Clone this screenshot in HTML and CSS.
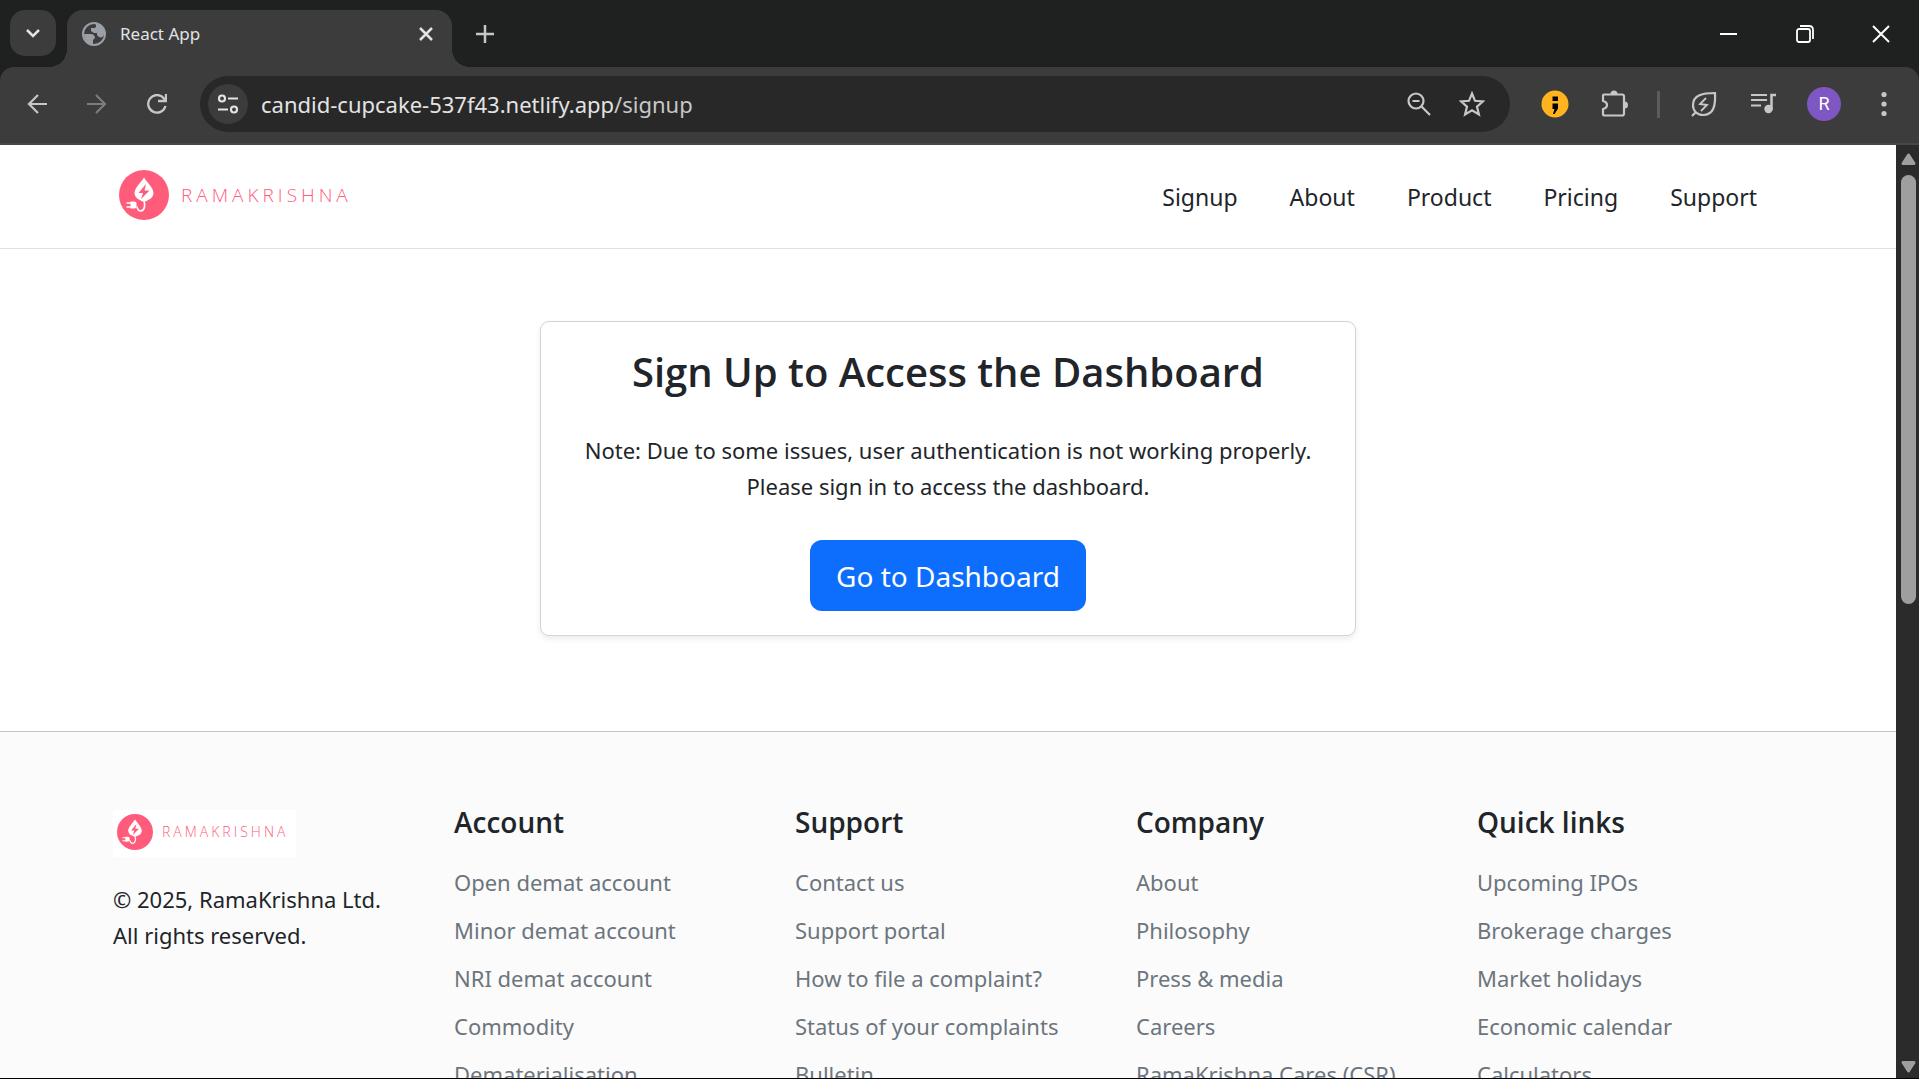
FILE: index.html
```html
<!DOCTYPE html>
<html lang="en">
<head>
<meta charset="utf-8">
<title>React App</title>
<meta name="viewport" content="width=device-width, initial-scale=1">
<link rel="stylesheet" href="styles.css">
</head>
<body>
<svg class="defs" aria-hidden="true">
  <symbol id="logo-mark" viewBox="0 0 50 50">
    <circle cx="25" cy="25" r="25" fill="#ff5c7c"/>
    <path d="M25 7.500C21 13.500 15.500 18 15.500 23.500a8.500 8.500 0 0 0 5.500 6.500q1.500 1.500 4 1.500t4-1.500A8.500 8.500 0 0 0 34.500 23.500C34.500 18 29 13.500 25 7.500Z" fill="#fff"/>
    <path d="M27 14l-7.500 9h4.500l-2 6 8.500-8.500h-5Z" fill="#ff5c7c"/>
    <path d="M25 31q1 3 .5 6t-3.500 4q-3.500 0-4-4.500" fill="none" stroke="#fff" stroke-width="1.600"/>
    <path d="M7.500 33h5M7.500 37h5" stroke="#fff" stroke-width="1.400"/>
    <path d="M11.500 31.500h3q3 0 3 2v3q0 2-3 2h-3Z" fill="#fff"/>
  </symbol>
</svg>
<div class="browser">
  <header class="tabstrip">
    <button class="tab-search" aria-label="Search tabs"><svg width="16" height="16" viewBox="0 0 16 16"><path d="M2 5l6 6 6-6" fill="none" stroke="#e3e3e3" stroke-width="2.500"/></svg></button>
    <div class="tab">
      <svg class="favicon" width="24" height="24" viewBox="0 0 24 24"><circle cx="12" cy="12" r="11" fill="none" stroke="#9aa0a6" stroke-width="2"/><path d="M13 1a11 11 0 0 1 10 11h-1c0 3-3 4-5 3l-2-2v-2h-3L9 9V6h3c2 0 2-1 2-3ZM2 12h7c2 0 3 1 4 3 0 2-2 2-2 3v5C6 22 2 18 2 12Z" fill="#9aa0a6"/></svg>
      <span class="tab-title">React App</span>
      <button class="tab-close" aria-label="Close tab"><svg width="14" height="14" viewBox="0 0 14 14"><path d="M1 1l12 12M13 1L1 13" stroke="#e3e3e3" stroke-width="2.500"/></svg></button>
    </div>
    <button class="new-tab" aria-label="New tab"><svg width="18" height="18" viewBox="0 0 18 18"><path d="M9 0v18M0 9h18" stroke="#c7c7c7" stroke-width="2.500"/></svg></button>
    <div class="window-controls">
      <button aria-label="Minimize"><svg width="18" height="18" viewBox="0 0 18 18"><path d="M0 9h17" stroke="#fff" stroke-width="2"/></svg></button>
      <button aria-label="Restore"><svg width="18" height="18" viewBox="0 0 18 18" fill="none" stroke="#fff" stroke-width="1.800"><rect x="1" y="4" width="13" height="13" rx="2"/><path d="M4 1h9q4 0 4 4v9"/></svg></button>
      <button aria-label="Close"><svg width="18" height="18" viewBox="0 0 18 18"><path d="M1 1l16 16M17 1L1 17" stroke="#fff" stroke-width="2"/></svg></button>
    </div>
  </header>

  <div class="toolbar">
    <button class="tool" aria-label="Back"><svg width="20" height="20" viewBox="0 0 20 20" fill="none" stroke="#c7c7c7" stroke-width="2.200"><path d="M20 10H2M11 1l-9 9 9 9"/></svg></button>
    <button class="tool" aria-label="Forward"><svg width="20" height="20" viewBox="0 0 20 20" fill="none" stroke="#7c7c7c" stroke-width="2.200"><path d="M0 10h18M9 1l9 9-9 9"/></svg></button>
    <button class="tool" aria-label="Reload"><svg width="20" height="20" viewBox="0 0 20 20" fill="none" stroke="#c7c7c7" stroke-width="2.300"><path d="M18.500 12A8.800 8.800 0 1 1 17 4.500l1.500 2M19 0v7h-8"/></svg></button>
    <div class="omnibox">
      <button class="site-info" aria-label="View site information"><svg width="22" height="20" viewBox="0 0 22 20" fill="none" stroke="#e3e3e3" stroke-width="2.200"><circle cx="5" cy="4.500" r="3"/><path d="M11 4.500h10M1 15.500h10"/><circle cx="17" cy="15.500" r="3"/></svg></button>
      <a class="url" href="/signup">candid-cupcake-537f43.netlify.app<span class="url-path">/signup</span></a>
      <button class="tool" aria-label="Zoom"><svg width="24" height="24" viewBox="0 0 24 24" fill="none" stroke="#c7c7c7" stroke-width="2.200"><circle cx="9" cy="9" r="7.500"/><path d="M5.500 9h7M14.500 14.500l8.500 8.500"/></svg></button>
      <button class="tool" aria-label="Bookmark this tab"><svg width="26" height="26" viewBox="0 0 26 26"><path d="M13 2.500l3 7.300 8 .6-6 5.200 1.900 7.800-6.900-4.200-6.900 4.200L8 15.600l-6-5.200 8-.6Z" fill="none" stroke="#c7c7c7" stroke-width="2.200"/></svg></button>
    </div>
    <div class="actions">
      <button class="tool" aria-label="Extension"><svg width="28" height="28" viewBox="0 0 28 28"><circle cx="14" cy="14" r="13.500" fill="#ffb41f"/><path d="M11.500 6.500h5.500v4.500h-5.500ZM11.500 13.500h5.500v5l-3.500 5.500h-1.500l1.500-5h-2Z" fill="#000"/></svg></button>
      <button class="tool" aria-label="Extensions"><svg width="28" height="28" viewBox="0 0 28 28"><path d="M3 4.500h18q2 0 2 2v17q0 2-2 2H3q-1 0-1-1v-5.500q4-1 4-4T2 11V5.500q0-1 1-1Z" fill="none" stroke="#c7c7c7" stroke-width="2.200" stroke-linejoin="round"/><path d="M9.500 4a3.500 3.500 0 0 1 7 0ZM23.500 11.500a3.500 3.500 0 0 1 0 7Z" fill="#c7c7c7"/></svg></button>
      <span class="divider"></span>
      <button class="tool" aria-label="Energy saver"><svg width="26" height="26" viewBox="0 0 26 26" fill="none" stroke="#c7c7c7" stroke-width="2.200"><path d="M24 2c.6 12-1 22-12 22C6 24 2 20 2 14 2 4 12 2 24 2ZM1 25l4-4"/><path d="M15 7l-6 6 7 1-6 6" stroke-width="1.800"/></svg></button>
      <button class="tool" aria-label="Media controls"><svg width="26" height="24" viewBox="0 0 26 24"><path d="M0 3h16M0 8h16M0 13.500h10" stroke="#c7c7c7" stroke-width="2.200"/><path d="M20.500 18V3H25" fill="none" stroke="#c7c7c7" stroke-width="2.500"/><circle cx="17.500" cy="17" r="4.200" fill="#c7c7c7"/></svg></button>
      <button class="avatar">R</button>
      <button class="tool menu" aria-label="Menu"><svg width="6" height="26" viewBox="0 0 6 26" fill="#c7c7c7"><circle cx="3" cy="3.500" r="2.600"/><circle cx="3" cy="13" r="2.600"/><circle cx="3" cy="22.500" r="2.600"/></svg></button>
    </div>
  </div>

  <div class="viewport">
    <div class="page">
      <nav class="navbar">
        <div class="container nav-inner">
          <a class="brand" href="/"><svg class="brand-mark"><use href="#logo-mark"/></svg><span>RAMAKRISHNA</span></a>
          <ul class="nav-links">
            <li><a href="/signup">Signup</a></li>
            <li><a href="/about">About</a></li>
            <li><a href="/product">Product</a></li>
            <li><a href="/pricing">Pricing</a></li>
            <li><a href="/support">Support</a></li>
          </ul>
        </div>
      </nav>

      <main class="main">
        <section class="card">
          <h1>Sign Up to Access the Dashboard</h1>
          <p>Note: Due to some issues, user authentication is not working properly.<br>Please sign in to access the dashboard.</p>
          <button class="cta">Go to Dashboard</button>
        </section>
      </main>

      <footer class="footer">
        <div class="container footer-grid">
          <div class="about">
            <a class="brand brand-small" href="/"><svg class="brand-mark"><use href="#logo-mark"/></svg><span>RAMAKRISHNA</span></a>
            <p>© 2025, RamaKrishna Ltd.<br>All rights reserved.</p>
          </div>
          <div>
            <h2>Account</h2>
            <ul>
              <li><a href="#">Open demat account</a></li>
              <li><a href="#">Minor demat account</a></li>
              <li><a href="#">NRI demat account</a></li>
              <li><a href="#">Commodity</a></li>
              <li><a href="#">Dematerialisation</a></li>
            </ul>
          </div>
          <div>
            <h2>Support</h2>
            <ul>
              <li><a href="#">Contact us</a></li>
              <li><a href="#">Support portal</a></li>
              <li><a href="#">How to file a complaint?</a></li>
              <li><a href="#">Status of your complaints</a></li>
              <li><a href="#">Bulletin</a></li>
            </ul>
          </div>
          <div>
            <h2>Company</h2>
            <ul>
              <li><a href="#">About</a></li>
              <li><a href="#">Philosophy</a></li>
              <li><a href="#">Press &amp; media</a></li>
              <li><a href="#">Careers</a></li>
              <li><a href="#">RamaKrishna Cares (CSR)</a></li>
            </ul>
          </div>
          <div>
            <h2>Quick links</h2>
            <ul>
              <li><a href="#">Upcoming IPOs</a></li>
              <li><a href="#">Brokerage charges</a></li>
              <li><a href="#">Market holidays</a></li>
              <li><a href="#">Economic calendar</a></li>
              <li><a href="#">Calculators</a></li>
            </ul>
          </div>
        </div>
      </footer>
    </div>
    <div class="scrollbar" aria-hidden="true">
      <svg width="15" height="12" viewBox="0 0 15 12"><path d="M7.500 2L13 10.500H2Z" fill="#9f9f9f" stroke="#9f9f9f" stroke-width="3" stroke-linejoin="round"/></svg>
      <div class="track"><div class="thumb"></div></div>
      <svg width="15" height="12" viewBox="0 0 15 12"><path d="M7.500 10L13 1.500H2Z" fill="#9f9f9f" stroke="#9f9f9f" stroke-width="3" stroke-linejoin="round"/></svg>
    </div>
  </div>
</div>
</body>
</html>
```
FILE: styles.css
```css
* { box-sizing: border-box; }

body {
  margin: 0;
  font-family: "Noto Sans", "Open Sans", sans-serif;
  font-size: 22px;
  line-height: 36px;
  color: #212529;
}

h1, h2, p, ul { margin: 0; padding: 0; }
h1, h2 { font-family: "Open Sans", "Noto Sans", sans-serif; }
ul { list-style: none; }
a { color: inherit; text-decoration: none; }

button {
  display: flex;
  align-items: center;
  justify-content: center;
  padding: 0;
  border: 0;
  background: none;
  font: inherit;
  color: inherit;
}

svg { display: block; flex: none; }

.defs { position: absolute; width: 0; height: 0; }

.browser {
  display: flex;
  flex-direction: column;
  height: 100vh;
  overflow: hidden;
  background: #1f2120;
  border-bottom: 1px solid #000;
}

/* Tab strip */
.tabstrip {
  display: flex;
  flex: none;
  height: 67px;
  padding: 10px 0 0 10px;
}

.tab-search {
  width: 46px;
  height: 46px;
  border-radius: 15px;
  background: #3c3c3c;
}

.tab {
  position: relative;
  display: flex;
  align-items: center;
  width: 385px;
  margin-left: 11px;
  padding: 0 19px 10px 15px;
  border-radius: 16px 16px 0 0;
  background: #3c3c3c;
}

.tab::before,
.tab::after {
  content: "";
  position: absolute;
  bottom: 0;
  width: 18px;
  height: 18px;
}

.tab::before {
  right: 100%;
  background: radial-gradient(circle at 0 0, transparent 18px, #3c3c3c 18px);
}

.tab::after {
  left: 100%;
  background: radial-gradient(circle at 100% 0, transparent 18px, #3c3c3c 18px);
}

.tab-title {
  flex: 1;
  margin-left: 14px;
  font-size: 17px;
  color: #e3e3e3;
}

.new-tab { width: 46px; height: 48px; margin-left: 10px; }

.window-controls { display: flex; margin-left: auto; }
.window-controls button { width: 76px; height: 48px; }

/* Toolbar */
.toolbar {
  display: flex;
  align-items: center;
  flex: none;
  height: 78px;
  padding: 0 19px 2px 7px;
  border-bottom: 2px solid #474747;
  border-radius: 14px 14px 0 0;
  background: #3c3c3c;
}

.tool { width: 60px; height: 56px; }

.omnibox {
  display: flex;
  align-items: center;
  flex: 1;
  height: 56px;
  margin-left: 13px;
  padding: 0 12px 0 8px;
  border-radius: 28px;
  background: #282828;
}

.omnibox .tool { width: 53px; }

.site-info {
  width: 40px;
  height: 40px;
  border-radius: 50%;
  background: #3c3c3c;
}

.url {
  flex: 1;
  margin-left: 13px;
  color: #e3e3e3;
}

.url-path { color: #c7c7c7; }

.actions { display: flex; align-items: center; padding-left: 15px; }
.divider { width: 3px; height: 27px; margin: 0 14px 0 12px; background: #5c5c5c; }

.avatar {
  width: 34px;
  height: 34px;
  margin: 0 13px;
  border-radius: 50%;
  background: #7e57c2;
  font-family: Roboto, sans-serif;
  font-size: 18px;
  color: #fff;
}

.actions .menu { width: 60px; margin-right: -14px; }

/* Page area */
.viewport {
  display: flex;
  flex: 1;
  min-height: 0;
}

.page {
  flex: 1;
  min-width: 0;
  overflow: hidden;
  background: #fff;
}

.container {
  width: 100%;
  max-width: 1710px;
  margin: 0 auto;
  padding: 0 20px;
}

.navbar { border-bottom: 1px solid #dee2e6; }

.nav-inner {
  display: flex;
  align-items: center;
  justify-content: space-between;
  height: 103px;
  padding-right: 46px;
}

.brand {
  display: flex;
  align-items: center;
  gap: 12px;
  padding: 0 6px 3px;
  font-family: "Open Sans", "Noto Sans", sans-serif;
  font-size: 19px;
  font-weight: 300;
  letter-spacing: 4px;
  color: #ff5c7c;
}

.brand-mark { width: 50px; height: 50px; }

.nav-links {
  display: flex;
  gap: 52px;
  font-size: 23px;
  color: #212529;
}

.main { padding: 72px 20px 95px; }

.card {
  display: flex;
  flex-direction: column;
  align-items: center;
  width: 100%;
  max-width: 816px;
  margin: 0 auto;
  padding: 24px;
  border: 1px solid #d3d4d5;
  border-radius: 9px;
  background: #fff;
  box-shadow: 0 3px 6px rgba(0, 0, 0, 0.08);
  text-align: center;
}

.card h1 {
  font-size: 40px;
  font-weight: 600;
  line-height: 52px;
}

.card p { margin: 34px 0 36px; }

.cta {
  height: 71px;
  padding: 0 26px;
  border-radius: 12px;
  background: #0d6efd;
  font-size: 28px;
  color: #fff;
}

.footer {
  border-top: 1px solid #c1c4c7;
  background: #fbfbfb;
}

.footer-grid {
  display: grid;
  grid-template-columns: repeat(5, minmax(0, 1fr));
  gap: 35px;
  padding-top: 72px;
}

.about { padding-top: 6px; }

.brand-small {
  gap: 9px;
  width: 183px;
  height: 47px;
  margin-bottom: 24px;
  padding: 0 4px 3px;
  background: #fff;
  font-size: 14px;
  letter-spacing: 3px;
}

.brand-small .brand-mark { width: 36px; height: 36px; }

.footer h2 {
  margin-bottom: 24px;
  font-size: 28px;
  font-weight: 600;
}

.footer ul { color: #6c757d; }
.footer li { margin-bottom: 12px; white-space: nowrap; }

/* Scrollbar */
.scrollbar {
  display: flex;
  flex-direction: column;
  align-items: center;
  flex: none;
  width: 23px;
  padding: 8px 0 5px 1px;
  background: #2b2b2b;
}

.track { flex: 1; width: 15px; margin: 10px 0; }

.thumb {
  height: 49%;
  border-radius: 8px;
  background: #9f9f9f;
}
```
